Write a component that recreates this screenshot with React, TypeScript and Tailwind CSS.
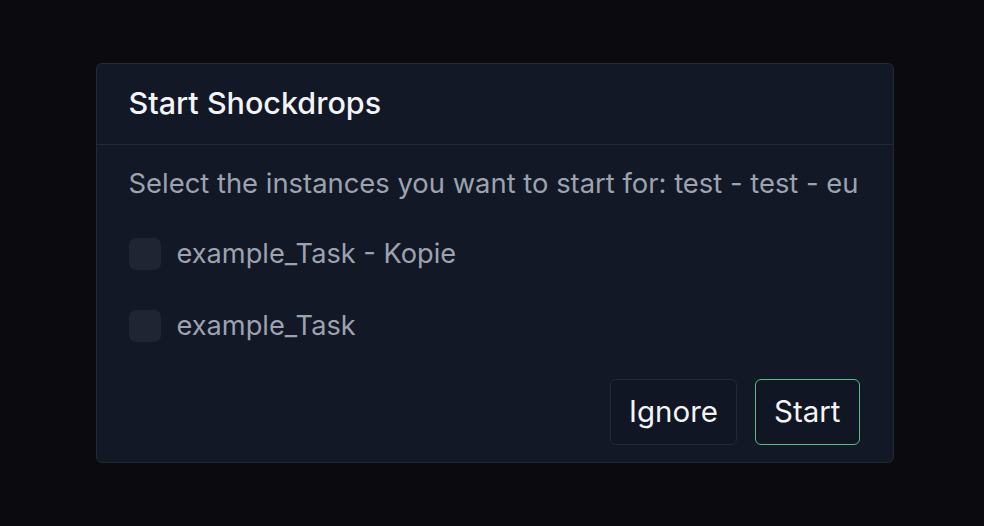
import { useState } from "react";

const instances = ["example_Task - Kopie", "example_Task"];

export default function App() {
  const [selected, setSelected] = useState<string[]>([]);

  const toggle = (name: string) => {
    setSelected((prev) =>
      prev.includes(name) ? prev.filter((n) => n !== name) : [...prev, name],
    );
  };

  return (
    <div
      className="flex h-screen w-full items-center justify-center bg-[#0a0a0f] pl-[5px] pb-[1px]"
      style={{ fontFamily: "Inter, 'Noto Sans', sans-serif" }}
    >
      <div className="flex w-[798px] flex-col rounded-md border border-[#232a37] bg-[#121826]">
        <div className="flex h-[81px] items-center border-b border-[#232a37] px-[32px]">
          <h2 className="text-[30.5px] font-medium leading-none text-[#f3f4f6]">
            Start Shockdrops
          </h2>
        </div>
        <div className="flex flex-col px-[32px] pt-[20px]">
          <p className="whitespace-nowrap text-[27.4px] leading-[36px] text-[#9ca3af]">
            Select the instances you want to start for: test - test - eu
          </p>
          <div className="mt-[35px] flex flex-col gap-[36px]">
            {instances.map((name) => (
              <label
                key={name}
                className="flex h-[36px] cursor-pointer items-center gap-[16px]"
              >
                <button
                  type="button"
                  onClick={() => toggle(name)}
                  className="h-[32px] w-[32px] rounded-[7px] bg-[#1f2533]"
                />
                <span className="text-[27.2px] leading-[36px] text-[#9ca3af]">
                  {name}
                </span>
              </label>
            ))}
          </div>
        </div>
        <div className="flex justify-end gap-[18px] px-[33px] pb-[17px] pt-[35px]">
          <button className="h-[66px] rounded-md border border-[#232a37] bg-[#111624] px-[18px] text-[29.5px] text-[#f3f4f6]">
            Ignore
          </button>
          <button className="h-[66px] rounded-md border border-[#5cbb82] bg-[#111624] px-[18px] text-[29.5px] text-[#f3f4f6]">
            Start
          </button>
        </div>
      </div>
    </div>
  );
}
